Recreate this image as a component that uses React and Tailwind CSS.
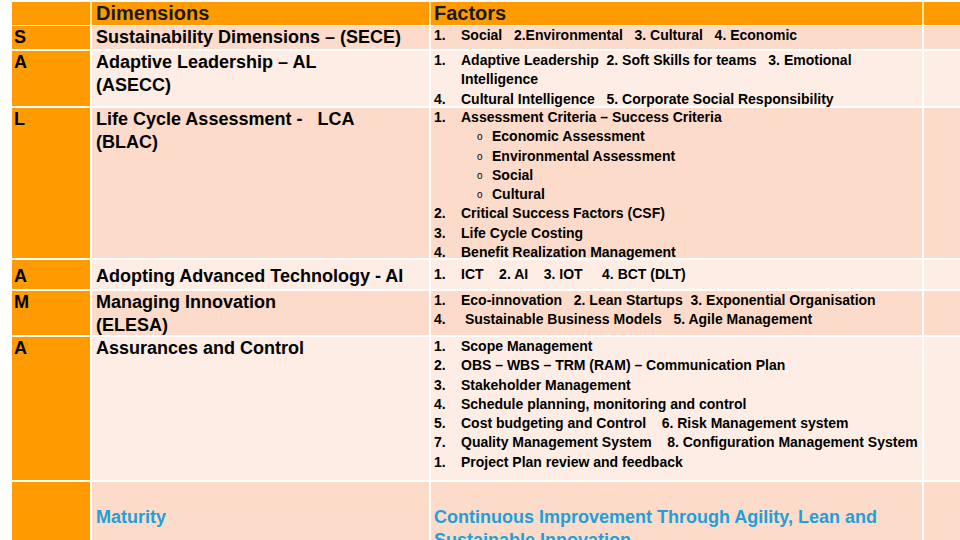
import React from "react";

const FONT = { fontFamily: '"Liberation Sans", Arial, sans-serif' };

const Item = ({ n, children }) => (
	<div className="flex h-[19.3px] leading-[19.3px]">
		<span className="w-[27px] shrink-0">{n}</span>
		<span className="whitespace-pre">{children}</span>
	</div>
);

const Sub = ({ children }) => (
	<div className="flex h-[19.3px] leading-[19.3px] pl-[43px]">
		<span className="w-[15px] shrink-0 text-[10px] font-normal">o</span>
		<span className="whitespace-pre">{children}</span>
	</div>
);

const rows = [
	{
		letter: "S",
		h: "h-[23px]",
		bg: "bg-[#fcdbca]",
		dim: ["Sustainability Dimensions – (SECE)"],
		factors: <Item n="1.">{"Social   2.Environmental   3. Cultural   4. Economic"}</Item>
	},
	{
		letter: "A",
		h: "h-[55px]",
		bg: "bg-[#fdede5]",
		dim: ["Adaptive Leadership – AL", "(ASECC)"],
		factors: (
			<>
				<Item n="1.">{"Adaptive Leadership  2. Soft Skills for teams   3. Emotional"}</Item>
				<Item n="">Intelligence</Item>
				<Item n="4.">{"Cultural Intelligence   5. Corporate Social Responsibility"}</Item>
			</>
		)
	},
	{
		letter: "L",
		h: "h-[150px]",
		bg: "bg-[#fcdbca]",
		dim: ["Life Cycle Assessment -   LCA", "(BLAC)"],
		factors: (
			<>
				<Item n="1.">Assessment Criteria – Success Criteria</Item>
				<Sub>Economic Assessment</Sub>
				<Sub>Environmental Assessment</Sub>
				<Sub>Social</Sub>
				<Sub>Cultural</Sub>
				<Item n="2.">Critical Success Factors (CSF)</Item>
				<Item n="3.">Life Cycle Costing</Item>
				<Item n="4.">Benefit Realization Management</Item>
			</>
		)
	},
	{
		letter: "A",
		h: "h-[29px]",
		bg: "bg-[#fdede5]",
		pad: "pt-[5px]",
		dim: ["Adopting Advanced Technology - AI"],
		factors: <Item n="1.">{"ICT    2. AI    3. IOT     4. BCT (DLT)"}</Item>
	},
	{
		letter: "M",
		h: "h-[44px]",
		bg: "bg-[#fcdbca]",
		dim: ["Managing Innovation", "(ELESA)"],
		factors: (
			<>
				<Item n="1.">{"Eco-innovation   2. Lean Startups  3. Exponential Organisation"}</Item>
				<Item n="4.">{" Sustainable Business Models   5. Agile Management"}</Item>
			</>
		)
	},
	{
		letter: "A",
		h: "h-[143px]",
		bg: "bg-[#fdede5]",
		dim: ["Assurances and Control"],
		factors: (
			<>
				<Item n="1.">Scope Management</Item>
				<Item n="2.">OBS – WBS – TRM (RAM) – Communication Plan</Item>
				<Item n="3.">Stakeholder Management</Item>
				<Item n="4.">Schedule planning, monitoring and control</Item>
				<Item n="5.">{"Cost budgeting and Control    6. Risk Management system"}</Item>
				<Item n="7.">{"Quality Management System    8. Configuration Management System"}</Item>
				<Item n="1.">Project Plan review and feedback</Item>
			</>
		)
	}
];

export default function App() {
	return (
		<div style={FONT} className="w-[960px] h-[540px] overflow-hidden bg-white pt-[2px] pl-[12px] text-black font-bold">
			{/* header */}
			<div className="grid grid-cols-[78px_337px_491px_1fr] gap-x-[2px] bg-[#ffe39a] h-[22px]">
				<div className="bg-[#ff9a00]"></div>
				<div className="bg-[#ff9a00] pl-[4px] text-[20px] leading-[23px] text-[#1a1a1a]">Dimensions</div>
				<div className="bg-[#ff9a00] pl-[3px] text-[20px] leading-[23px] text-[#1a1a1a]">Factors</div>
				<div className="bg-[#ff9a00]"></div>
			</div>

			{/* body */}
			<div className="mt-[2px] grid grid-cols-[78px_337px_491px_1fr] gap-[2px]">
				{rows.map((r, i) => (
					<React.Fragment key={i}>
						<div className={`bg-[#ff9a00] pl-[2px] text-[18px] leading-[23px] ${r.h} ${r.pad || ""}`}>{r.letter}</div>
						<div className={`${r.bg} pl-[4px] text-[18px] leading-[23px] whitespace-pre ${r.h} ${r.pad || ""}`}>
							{r.dim.map((d, j) => <div key={j}>{d}</div>)}
						</div>
						<div className={`${r.bg} pl-[3px] text-[14px] ${r.h} ${r.pad || ""}`}>{r.factors}</div>
						<div className={`${r.bg} ${r.h}`}></div>
					</React.Fragment>
				))}

				{/* maturity */}
				<div className="bg-[#ff9a00] h-[90px]"></div>
				<div className="bg-[#fcdbca] h-[90px] pl-[4px] pt-[24px] text-[18px] leading-[23px] text-[#1fa0d8]">Maturity</div>
				<div className="bg-[#fcdbca] h-[90px] pl-[3px] pt-[24px] text-[18px] leading-[23px] text-[#1fa0d8]">
					<div>Continuous Improvement Through Agility, Lean and</div>
					<div>Sustainable Innovation</div>
				</div>
				<div className="bg-[#fcdbca] h-[90px]"></div>
			</div>
		</div>
	);
}
